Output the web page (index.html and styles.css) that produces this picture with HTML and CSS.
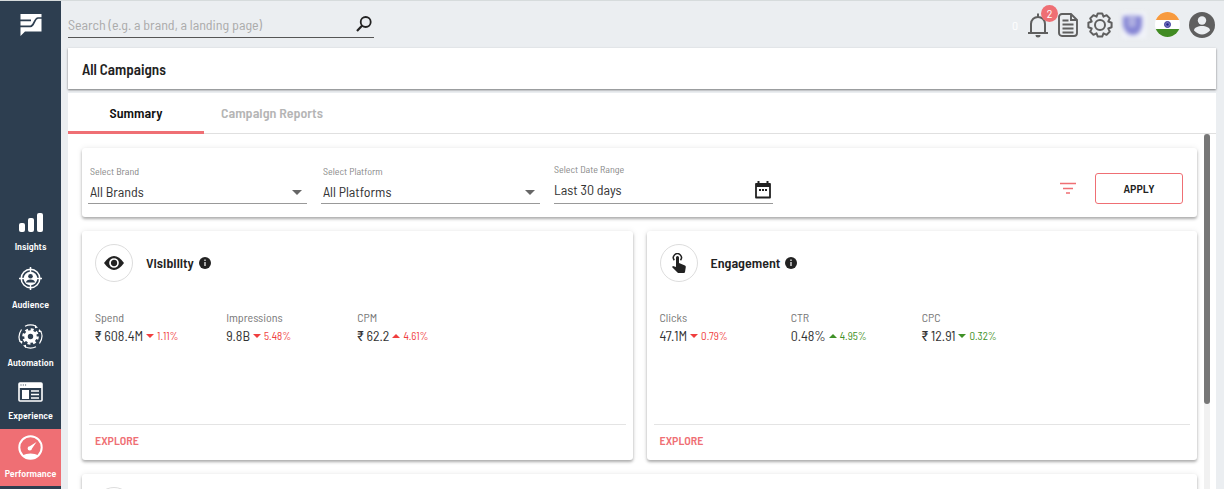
FILE: index.html
```html
<!DOCTYPE html>
<html lang="en">
<head>
  <meta charset="utf-8">
  <title>All Campaigns</title>
  <link rel="stylesheet" href="styles.css">
</head>
<body>
  <nav class="sidebar">
    <a class="logo" href="#" aria-label="Home">
      <svg width="22" height="22" viewBox="0 0 22 22">
        <path fill="#fff" d="M.5 0H21.500V17.500H5L.5 22z"/>
        <path fill="none" stroke="#2d3e50" stroke-width="1.700" d="M0 6.300H11M0 12.300H10.500C14.500 12.300 14 4 18 4H22"/>
      </svg>
    </a>
    <div class="menu">
      <a class="menuItem" href="#">
        <svg width="26" height="21" viewBox="0 0 26 21" fill="#fff">
          <rect x="1" y="11" width="6" height="9" rx="2"/>
          <rect x="10" y="6" width="6" height="14" rx="2"/>
          <rect x="19" y="1" width="6" height="19" rx="2"/>
        </svg>
        <span>Insights</span>
      </a>
      <a class="menuItem" href="#">
        <svg width="25" height="25" viewBox="0 0 25 25">
          <circle cx="12.500" cy="12.500" r="9.300" fill="none" stroke="#fff" stroke-width="1.500"/>
          <circle cx="12.500" cy="12.500" r="6.800" fill="#fff"/>
          <path d="M12.500 1v5M12.500 19v5M1 12.500h5M19 12.500h5" stroke="#fff" stroke-width="1.500"/>
          <circle cx="12.500" cy="10.300" r="2.300" fill="#2d3e50"/>
          <path d="M8 16.500c0-4 9-4 9 0z" fill="#2d3e50"/>
        </svg>
        <span>Audience</span>
      </a>
      <a class="menuItem" href="#">
        <svg width="25" height="25" viewBox="0 0 25 25">
          <circle cx="12.500" cy="12.500" r="4.500" fill="none" stroke="#fff" stroke-width="3.600"/>
          <circle cx="12.500" cy="12.500" r="7" fill="none" stroke="#fff" stroke-width="2.600" stroke-dasharray="2.900 2.600"/>
          <path d="M7 2.200Q12.500-.3 18 2.200M7 22.800q5.500 2.500 11 0M3.500 5.500Q-1 12.500 2.500 18M21.500 19.500Q26 12.500 22.500 7" fill="none" stroke="#fff" stroke-width="1.200"/>
          <path d="M17 1l3 2.500-3 .8zM8 24l-3-2.500 3-.8zM1 17l3 3 .4-3zM24 8l-3-3-.4 3z" fill="#fff"/>
        </svg>
        <span>Automation</span>
      </a>
      <a class="menuItem" href="#">
        <svg width="25" height="20" viewBox="0 0 25 20">
          <rect x="1" y="1" width="23" height="18" rx="1" fill="none" stroke="#fff" stroke-width="1.600"/>
          <path d="M1 1h23v5H1z" fill="#fff"/>
          <path d="M2.500 3h1M4.800 3h1M7.100 3h1" stroke="#2d3e50" stroke-width="1.200"/>
          <rect x="4" y="8" width="7" height="9" fill="#fff"/>
          <path d="M13 9h8M13 12.500h8M13 16h8" stroke="#fff" stroke-width="1.700"/>
        </svg>
        <span>Experience</span>
      </a>
      <a class="menuItem active" href="#">
        <svg width="25" height="25" viewBox="0 0 25 25">
          <circle cx="12.500" cy="12.500" r="11.200" fill="none" stroke="#fff" stroke-width="2"/>
          <path d="M4 20.500q8.500-4 17 0-8.500 7-17 0z" fill="#fff"/>
          <path d="M18.500 7l-4.500 6.600a2.200 2.200 0 1 1-2.200-2.400z" fill="#fff"/>
        </svg>
        <span>Performance</span>
      </a>
    </div>
  </nav>

  <div class="page">
    <header class="topBar">
      <form class="search">
        <input type="text" aria-label="Search" placeholder="Search (e.g. a brand, a landing page)">
        <button type="button" aria-label="Search">
          <svg width="16" height="16" viewBox="0 0 16 16" fill="none" stroke="#222" stroke-width="1.800">
            <circle cx="9.700" cy="6" r="5"/>
            <path d="M6.200 9.600L1 15" stroke-width="2.200"/>
          </svg>
        </button>
      </form>
      <div class="tools">
        <span class="credits">0</span>
        <button class="tool" aria-label="Notifications">
          <svg width="22" height="26" viewBox="0 0 22 26">
            <path d="M1 21h20M4 20.500V12c0-9.500 14-9.500 14 0v8.500M11 1.500V5" fill="none" stroke="#5f5f5f" stroke-width="2"/>
            <path d="M8.500 23h5a2.500 2.500 0 0 1-5 0z" fill="#5f5f5f"/>
          </svg>
          <span class="badge">2</span>
        </button>
        <button class="tool" aria-label="Reports">
          <svg width="20" height="24" viewBox="0 0 20 24" fill="none" stroke="#5f5f5f" stroke-width="1.900">
            <path d="M1 4a3 3 0 0 1 3-3h9l6 6v13a3 3 0 0 1-3 3H4a3 3 0 0 1-3-3zM13 1v6h6"/>
            <path d="M4.500 7.500h6M4.500 11.500h11M4.500 15.500h11M4.500 19.500h11"/>
          </svg>
        </button>
        <button class="tool" aria-label="Settings">
          <svg width="26" height="26" viewBox="0 0 26 26" fill="none" stroke="#5f5f5f" stroke-width="2" stroke-linejoin="round">
            <path d="M24.600 10.800v4.400L21.300 16.500 22.800 19.600 19.600 22.800 16.500 21.300 15.200 24.600H10.800L9.500 21.300 6.400 22.800 3.200 19.600 4.700 16.500 1.400 15.200V10.800L4.700 9.500 3.200 6.400 6.400 3.200 9.500 4.700 10.800 1.400H15.200L16.500 4.700 19.600 3.200 22.800 6.400 21.300 9.500z"/>
            <circle cx="13" cy="13" r="5"/>
          </svg>
        </button>
        <button class="tool" aria-label="Brand">
          <svg class="brandLogo" width="24" height="26" viewBox="2 0 24 26">
            <rect width="26" height="26" fill="#f1f3f9"/>
            <path d="M3 4h6v9q3 3 6 0V4h7v10q-2 9-9 9t-10-9z" fill="#8484d4"/>
            <path d="M8 3h8v11q-4 3-8 0z" fill="#b0b0e2"/>
          </svg>
        </button>
        <button class="tool" aria-label="Country">
          <svg width="25" height="25" viewBox="0 0 25 25">
            <clipPath id="flag"><circle cx="12.500" cy="12.500" r="12.500"/></clipPath>
            <g clip-path="url(#flag)">
              <rect width="25" height="25" fill="#fff"/>
              <rect width="25" height="8" fill="#f79a3e"/>
              <rect y="17" width="25" height="8" fill="#418b23"/>
            </g>
            <circle cx="12.500" cy="12.500" r="3" fill="#7575bd" stroke="#3c3c9c"/>
            <circle cx="12.500" cy="12.500" r="1.200" fill="#22228a"/>
          </svg>
        </button>
        <button class="tool" aria-label="Account">
          <svg width="26" height="26" viewBox="0 0 26 26">
            <circle cx="13" cy="13" r="13" fill="#5f5f5f"/>
            <circle cx="13" cy="8.500" r="4.200" fill="#ebeef1"/>
            <path d="M5 18.500c0-6 16-6 16 0q-8 8-16 0z" fill="#ebeef1"/>
          </svg>
        </button>
      </div>
    </header>

    <h1 class="pageTitle">All Campaigns</h1>

    <main class="panel">
      <div class="tabs" role="tablist">
        <button class="tab selected" role="tab" aria-selected="true">Summary</button>
        <button class="tab" role="tab" aria-selected="false">Campaign Reports</button>
      </div>

      <div class="scroller">
        <div class="content">
          <form class="card filters">
            <div class="field">
              <label for="brand">Select Brand</label>
              <select id="brand"><option>All Brands</option></select>
              <svg class="arrow" width="10" height="5" viewBox="0 0 10 5"><path d="M0 0h10L5 5z" fill="#666"/></svg>
            </div>
            <div class="field">
              <label for="platform">Select Platform</label>
              <select id="platform"><option>All Platforms</option></select>
              <svg class="arrow" width="10" height="5" viewBox="0 0 10 5"><path d="M0 0h10L5 5z" fill="#666"/></svg>
            </div>
            <div class="field date">
              <label for="range">Select Date Range</label>
              <input id="range" type="text" value="Last 30 days">
              <svg class="calendar" width="16" height="18" viewBox="0 0 16 18">
                <path d="M1 3h14v13.500H1z" fill="none" stroke="#222" stroke-width="1.800" stroke-linejoin="round"/>
                <path d="M1 2h14v4H1zM2.500 0h2v3h-2zM11.500 0h2v3h-2z" fill="#222"/>
                <path d="M4 9h2M7 9h2M10 9h2" stroke="#222" stroke-width="2"/>
              </svg>
            </div>
            <div class="actions">
              <button type="button" class="filterButton" aria-label="More filters">
                <svg width="16" height="12" viewBox="0 0 16 12" stroke="#ef6f74" stroke-width="1.600"><path d="M0 1.500h16M3 6.500h10M6 11h4"/></svg>
              </button>
              <button type="button" class="applyButton">APPLY</button>
            </div>
          </form>

          <div class="cards">
            <section class="card summary">
              <div class="cardHead">
                <span class="round">
                  <svg width="20" height="14" viewBox="0 0 20 14">
                    <path d="M0 7q10-14 20 0-10 14-20 0z" fill="#222"/>
                    <circle cx="10" cy="7" r="4" fill="#222" stroke="#fff" stroke-width="1.700"/>
                  </svg>
                </span>
                <h2>Visibility</h2>
                <svg width="12" height="12" viewBox="0 0 12 12"><circle cx="6" cy="6" r="6" fill="#222"/><path d="M6 2.500V4M6 5v4" stroke="#fff" stroke-width="1.200"/></svg>
              </div>
              <dl class="stats">
                <div class="stat">
                  <dt>Spend</dt>
                  <dd>₹ 608.4M <span class="change down bad">1.11%</span></dd>
                </div>
                <div class="stat">
                  <dt>Impressions</dt>
                  <dd>9.8B <span class="change down bad">5.48%</span></dd>
                </div>
                <div class="stat">
                  <dt>CPM</dt>
                  <dd>₹ 62.2 <span class="change up bad">4.61%</span></dd>
                </div>
              </dl>
              <div class="cardFoot"><a href="#">EXPLORE</a></div>
            </section>

            <section class="card summary">
              <div class="cardHead">
                <span class="round">
                  <svg width="16" height="20" viewBox="0 0 16 20">
                    <path d="M3.300 7.200a4 4 0 1 1 6.200 0" fill="none" stroke="#222" stroke-width="1.500"/>
                    <path d="M5 4.500a1.500 1.500 0 0 1 3 0V10l6 2.500q1 .5.800 1.500L14 19q-.2 1-1 1H7L1 14l1-1 3 1z" fill="#222"/>
                  </svg>
                </span>
                <h2>Engagement</h2>
                <svg width="12" height="12" viewBox="0 0 12 12"><circle cx="6" cy="6" r="6" fill="#222"/><path d="M6 2.500V4M6 5v4" stroke="#fff" stroke-width="1.200"/></svg>
              </div>
              <dl class="stats">
                <div class="stat">
                  <dt>Clicks</dt>
                  <dd>47.1M <span class="change down bad">0.79%</span></dd>
                </div>
                <div class="stat">
                  <dt>CTR</dt>
                  <dd>0.48% <span class="change up good">4.95%</span></dd>
                </div>
                <div class="stat">
                  <dt>CPC</dt>
                  <dd>₹ 12.91 <span class="change down good">0.32%</span></dd>
                </div>
              </dl>
              <div class="cardFoot"><a href="#">EXPLORE</a></div>
            </section>
          </div>

          <section class="card more">
            <span class="round"></span>
          </section>
        </div>
        <div class="rail"><div class="thumb"></div></div>
      </div>
    </main>
  </div>
</body>
</html>
```

FILE: styles.css
```css
* {
  box-sizing: border-box;
}

body {
  margin: 0;
  height: 100vh;
  display: flex;
  overflow: hidden;
  border-top: 1px solid #d6dbdc;
  background-color: #ebeef1;
  color: #333;
  font-family: "Barlow Semi Condensed", "Liberation Sans Narrow", "Roboto Condensed", Roboto, sans-serif;
  font-size: 14px;
}

button, input, select {
  font: inherit;
  color: inherit;
  border: none;
  padding: 0;
  background: none;
}

a {
  color: inherit;
  text-decoration: none;
}

svg {
  display: block;
}

.sidebar {
  width: 61px;
  flex-shrink: 0;
  display: flex;
  flex-direction: column;
  justify-content: space-between;
  align-items: center;
  padding: 13px 0 3px;
  background-color: #2d3e50;
}

.menu {
  width: 100%;
  display: flex;
  flex-direction: column;
  gap: 1px;
}

.menuItem {
  display: flex;
  flex-direction: column;
  align-items: center;
  gap: 6px;
  padding: 6px 0;
  color: white;
  font-size: 10px;
  line-height: 14px;
  font-weight: 600;
}

.menuItem.active {
  background-color: #ef6f74;
}

.page {
  flex: 1;
  min-width: 0;
  display: flex;
  flex-direction: column;
  padding: 0 8px 0 7px;
}

.topBar {
  display: flex;
  justify-content: space-between;
  align-items: flex-start;
  height: 47px;
}

.search {
  display: flex;
  align-items: center;
  width: 306px;
  height: 37px;
  padding: 10px 2px 0 0;
  border-bottom: 1px solid #555;
}

.search input {
  flex: 1;
  outline: none;
}

.search input::placeholder {
  color: #aaa;
}

.tools {
  display: flex;
  align-items: center;
  gap: 9px;
  height: 47px;
  padding-right: 1px;
}

.credits {
  color: white;
  font-size: 12px;
}

.tool {
  position: relative;
}

.brandLogo {
  filter: blur(2px);
}

.badge {
  position: absolute;
  top: -7px;
  right: -9px;
  width: 17px;
  height: 17px;
  border-radius: 50%;
  background-color: #ef6f74;
  color: white;
  font-size: 12px;
  line-height: 17px;
}

.pageTitle {
  margin: 0 0 4px;
  padding: 1px 14px 0;
  background-color: white;
  box-shadow: 0 1px 2px rgba(0, 0, 0, 0.5);
  color: #222;
  font-size: 15px;
  line-height: 40px;
  font-weight: 600;
}

.panel {
  flex: 1;
  min-height: 0;
  display: flex;
  flex-direction: column;
  background-color: white;
}

.tabs {
  display: flex;
  flex-shrink: 0;
  height: 41px;
  border-bottom: 1px solid #e0e0e0;
}

.tab {
  width: 136px;
  height: 41px;
  border-bottom: 3px solid transparent;
  color: #b5b5b5;
  font-weight: 600;
}

.tab.selected {
  border-color: #ef6f74;
  color: #111;
}

.scroller {
  flex: 1;
  min-height: 0;
  display: flex;
  padding-right: 6px;
}

.content {
  flex: 1;
  min-width: 0;
  overflow-y: auto;
  padding: 14px 7px 14px 14px;
  scrollbar-width: none;
}

.rail {
  width: 6px;
  background-color: #f1f1f1;
}

.thumb {
  height: 76%;
  border-radius: 3px;
  background-color: #777;
}

.card {
  border-radius: 3px;
  background-color: white;
  box-shadow: 0 2px 3px rgba(0, 0, 0, 0.3), 0 0 6px rgba(0, 0, 0, 0.08);
}

.filters {
  display: flex;
  gap: 14px;
  padding: 14px 14px 13px 6px;
}

.field {
  position: relative;
  flex: 0 0 20%;
  display: flex;
  flex-direction: column;
  justify-content: flex-end;
  height: 42px;
  border-bottom: 1px solid #999;
}

.field label {
  padding-left: 2px;
  color: #888;
  font-size: 10px;
  line-height: 12px;
}

.field select,
.field input {
  height: 22px;
  width: 100%;
  margin: 3px 0 1px;
  padding-left: 2px;
  appearance: none;
  outline: none;
}

.field.date label,
.field.date input {
  padding-left: 0;
}

.field.date input {
  margin-bottom: 3px;
}

.arrow {
  position: absolute;
  right: 5px;
  bottom: 8px;
}

.calendar {
  position: absolute;
  right: 2px;
  bottom: 4px;
}

.actions {
  display: flex;
  align-items: center;
  gap: 19px;
  margin: 0 0 0 auto;
}

.applyButton {
  width: 88px;
  height: 31px;
  margin-top: 10px;
  border: 1px solid #ef6f74;
  border-radius: 3px;
  color: #222;
  font-size: 12px;
  font-weight: 600;
}

.filterButton {
  margin-top: 10px;
}

.cards {
  display: flex;
  gap: 14px;
  margin: 14px 0;
}

.summary {
  flex: 1;
  display: flex;
  flex-direction: column;
  padding: 0 7px;
}

.cardHead {
  display: flex;
  align-items: center;
  gap: 5px;
  padding: 13px 6px 0;
}

.round {
  display: flex;
  align-items: center;
  justify-content: center;
  width: 38px;
  height: 38px;
  border: 1px solid #ddd;
  border-radius: 50%;
}

.cardHead h2 {
  margin: 0 0 0 8px;
  color: #222;
  font-size: 14px;
  line-height: 20px;
  font-weight: 600;
}

.stats {
  display: flex;
  height: 142px;
  margin: 0;
  padding: 26px 6px 0;
}

.stat {
  width: 25%;
  white-space: nowrap;
}

.stat dt {
  color: #777;
  font-size: 12px;
  line-height: 18px;
}

.stat dd {
  display: flex;
  align-items: center;
  gap: 3px;
  margin: 0;
  line-height: 19px;
}

.change {
  display: flex;
  align-items: center;
  gap: 3px;
  font-size: 11px;
}

.change::before {
  content: "";
  border: 4px solid transparent;
}

.change.down::before {
  border-top-color: currentColor;
  border-bottom: none;
}

.change.up::before {
  border-bottom-color: currentColor;
  border-top: none;
}

.bad {
  color: #f03e3e;
}

.good {
  color: #3f9127;
}

.cardFoot {
  padding: 5px 6px 10px;
  border-top: 1px solid #e4e4e4;
  color: #ef6f74;
  font-size: 12px;
  line-height: 20px;
  font-weight: 600;
}

.more {
  min-height: 113px;
  padding: 13px;
}
```
